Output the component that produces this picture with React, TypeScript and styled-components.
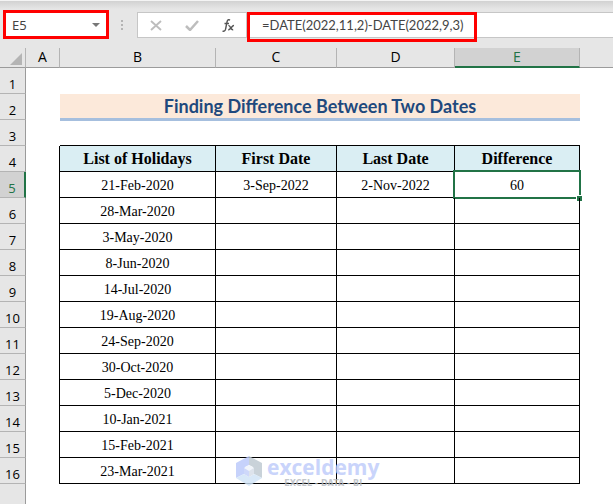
import React from "react";
import styled, { createGlobalStyle, css } from "styled-components";

const GlobalStyle = createGlobalStyle`
  *, *::before, *::after { box-sizing: border-box; }
  body {
    margin: 0;
    background: #ffffff;
    color: #000000;
    font-family: "Open Sans", "Noto Sans", sans-serif;
  }
`;

const GREEN = "#217346";
const RED = "#ff0000";

const Workbook = styled.main`
  position: relative;
  min-height: 100vh;
  overflow: hidden;
  display: flex;
  flex-direction: column;
`;

const FormulaBar = styled.header`
  display: flex;
  align-items: flex-start;
  height: 48px;
  padding-top: 10px;
  background: linear-gradient(#f4f4f4 0 1px, #d2d2d2 1px, #e6e6e6 9px);
`;

const NameBox = styled.div`
  display: flex;
  align-items: center;
  width: 106px;
  height: 29px;
  margin-left: 3px;
  border: 3px solid ${RED};
  background: #ffffff;
`;

const NameInput = styled.input`
  flex: 1;
  min-width: 0;
  padding: 0 0 0 6px;
  border: 0;
  outline: 0;
  background: transparent;
  color: #444444;
  font: 13px/20px "Noto Sans", sans-serif;
`;

const IconButton = styled.button<{ $width: number }>`
  display: flex;
  align-items: center;
  justify-content: center;
  width: ${(p) => p.$width}px;
  height: 23px;
  padding: 0;
  border: 0;
  background: transparent;
`;

const Grip = styled.div`
  display: grid;
  gap: 2px;
  margin: 10px 14px 0 12px;

  i {
    width: 2px;
    height: 2px;
    background: #b4b4b4;
  }
`;

const Actions = styled.div`
  display: flex;
  align-items: center;
  width: 110px;
  height: 26px;
  margin-top: 2px;
  border: 1px solid #c6c6c6;
  background: #ffffff;
`;

const FormulaField = styled.div`
  position: relative;
  flex: 1;
  height: 26px;
  margin-top: 2px;
  border: solid #c6c6c6;
  border-width: 1px 0;
  background: #ffffff;
`;

const FormulaInput = styled.input`
  display: block;
  width: 100%;
  height: 24px;
  padding: 0 0 0 15px;
  border: 0;
  outline: 0;
  background: transparent;
  color: #444444;
  font: 13px/24px Lato, sans-serif;
`;

const Callout = styled.div`
  position: absolute;
  top: -1px;
  left: 0;
  width: 230px;
  height: 30px;
  border: 3px solid ${RED};
  pointer-events: none;
`;

const Sheet = styled.table`
  width: 100%;
  table-layout: fixed;
  border-collapse: separate;
  border-spacing: 0;

  th, td { padding: 0; }
`;

const Col = styled.col<{ $width?: number }>`
  width: ${(p) => (p.$width ? `${p.$width}px` : "auto")};
`;

const Corner = styled.td`
  height: 20px;
  border-right: 1px solid #b4b4b4;
  border-bottom: 1px solid #9b9b9b;
  background: #e6e6e6;

  svg { display: block; margin: 3px 0 0 10px; }
`;

const ColumnHead = styled.th<{ $active?: boolean; $last?: boolean }>`
  height: 20px;
  border-right: ${(p) => (p.$last ? "0" : "1px solid #b4b4b4")};
  border-bottom: 1px solid #9b9b9b;
  background: #e6e6e6;
  font: 14px/18px "Open Sans", "Noto Sans", sans-serif;
  text-align: center;
  vertical-align: top;
  ${(p) =>
    p.$active &&
    css`
      border-bottom: 2px solid ${GREEN};
      background: #d2d2d2;
      color: ${GREEN};
    `}
`;

const RowHead = styled.th<{ $active?: boolean }>`
  height: 26px;
  border-right: 1px solid #9b9b9b;
  border-bottom: 1px solid #b4b4b4;
  background: #e6e6e6;
  font: 13px/17px "Open Sans", "Noto Sans", sans-serif;
  text-align: center;
  vertical-align: bottom;
  ${(p) =>
    p.$active &&
    css`
      border-right: 2px solid ${GREEN};
      background: #d2d2d2;
      color: ${GREEN};
    `}
`;

const Blank = styled.td<{ $right?: boolean; $bottom?: boolean }>`
  height: 26px;
  border-right: ${(p) => (p.$right ? "1px solid #000000" : "0")};
  border-bottom: ${(p) => (p.$bottom ? "1px solid #000000" : "0")};
`;

const Title = styled.td`
  border-bottom: 2px solid #a6bfde;
  background: #fce9da;
  box-shadow: 0 1px 0 #a6bfde;
  color: #1f497d;
  font: bold 18px/24px Lato, sans-serif;
  text-align: center;
`;

const Cell = styled.td`
  position: relative;
  height: 26px;
  border-right: 1px solid #000000;
  border-bottom: 1px solid #000000;
  font: 14px/23px "Liberation Serif", serif;
  text-align: center;
  vertical-align: bottom;
`;

const HeadingCell = styled.th`
  height: 26px;
  border-right: 1px solid #000000;
  border-bottom: 1px solid #000000;
  background: #daeef3;
  font: bold 16px/25px "Liberation Serif", serif;
  text-align: center;
`;

const Selection = styled.div`
  position: absolute;
  inset: -2px;
  border: 2px solid ${GREEN};

  &::after {
    content: "";
    position: absolute;
    right: -3px;
    bottom: -4px;
    width: 6px;
    height: 6px;
    border: solid #ffffff;
    border-width: 1px 0 0 1px;
    background: ${GREEN};
  }
`;

const Watermark = styled.div`
  position: absolute;
  z-index: 1;
  top: -2px;
  left: 19px;
  display: flex;
  gap: 4px;
  opacity: 0.8;
  pointer-events: none;
`;

const Brand = styled.div`
  color: #bccafb;
  font: bold 21px/23px "Open Sans", sans-serif;
  text-align: center;
  white-space: nowrap;

  small {
    display: block;
    color: #b4b9bf;
    font: bold 8px/9px "DejaVu Sans", sans-serif;
  }
`;

const columns = ["A", "B", "C", "D", "E"];
const widths = [26, 34, 156, 121, 118, 125];
const headings = ["List of Holidays", "First Date", "Last Date", "Difference"];
const holidays = [
  "21-Feb-2020", "28-Mar-2020", "3-May-2020", "8-Jun-2020",
  "14-Jul-2020", "19-Aug-2020", "24-Sep-2020", "30-Oct-2020",
  "5-Dec-2020", "10-Jan-2021", "15-Feb-2021", "23-Mar-2021",
];

function Logo() {
  return (
    <svg width="28" height="31" viewBox="0 0 28 31" aria-hidden="true">
      <path d="M14 0 1 7v15l8-4 1-7 4-2z" fill="#b8c8fb" />
      <path d="m14 0 13 7v15l-8-4-1-7-4-2z" fill="#bcc8d0" />
      <path d="m1 22 8-4 5 3 5-3 8 4-13 8z" fill="#cfe3f7" />
      <path d="m9 12 5-3 5 3v6l-5 3-5-3z" fill="#eef3fb" />
      <path d="m9 12 5 3v6l-5-3z" fill="#c3cffa" />
      <path d="m14 15 5-3v6l-5 3z" fill="#d5dde8" />
    </svg>
  );
}

export default function App() {
  return (
    <Workbook>
      <GlobalStyle />
      <FormulaBar>
        <NameBox>
          <NameInput aria-label="Name box" defaultValue="E5" />
          <IconButton $width={20} aria-label="Show names">
            <svg width="8" height="4" viewBox="0 0 8 4"><path d="M0 0h8L4 4z" fill="#777" /></svg>
          </IconButton>
        </NameBox>
        <Grip><i /><i /><i /></Grip>
        <Actions>
          <IconButton $width={36} aria-label="Cancel">
            <svg width="12" height="11" viewBox="0 0 12 11"><path d="m1 1 10 9M11 1 1 10" stroke="#bdbdbd" strokeWidth="1.9" /></svg>
          </IconButton>
          <IconButton $width={36} aria-label="Enter">
            <svg width="14" height="11" viewBox="0 0 14 11"><path d="m1 6 4 4 8-9" fill="none" stroke="#bdbdbd" strokeWidth="2.5" /></svg>
          </IconButton>
          <IconButton $width={36} aria-label="Insert function">
            <svg width="13" height="13" viewBox="0 0 13 13" fill="none" stroke="#555" strokeWidth="1.4">
              <path d="M8 1.2C6.500 0 5.400 1 5 3L3.600 10C3.300 11.800 2 12.600 .6 12M2.500 4.500H7" />
              <path d="M6.400 6.700c2-.8 2.400 4.800 4.800 4M12 6.500c-2-.3-3.500 4.700-5.800 4.300" />
            </svg>
          </IconButton>
        </Actions>
        <FormulaField>
          <FormulaInput aria-label="Formula" defaultValue="=DATE(2022,11,2)-DATE(2022,9,3)" />
          <Callout />
        </FormulaField>
      </FormulaBar>
      <Sheet>
        <colgroup>
          {widths.map((w, i) => <Col key={i} $width={w} />)}
          <Col />
        </colgroup>
        <thead>
          <tr>
            <Corner>
              <svg width="12" height="12" viewBox="0 0 12 12"><path d="M12 0v12H0z" fill="#b4b4b4" /></svg>
            </Corner>
            {columns.map((c) => <ColumnHead key={c} scope="col" $active={c === "E"}>{c}</ColumnHead>)}
            <ColumnHead $last />
          </tr>
        </thead>
        <tbody>
          <tr><RowHead scope="row">1</RowHead><Blank colSpan={6} /></tr>
          <tr><RowHead scope="row">2</RowHead><Blank /><Title colSpan={4}>Finding Difference Between Two Dates</Title><Blank /></tr>
          <tr><RowHead scope="row">3</RowHead><Blank /><Blank $bottom colSpan={4} /><Blank /></tr>
          <tr>
            <RowHead scope="row">4</RowHead>
            <Blank $right />
            {headings.map((h) => <HeadingCell key={h} scope="col">{h}</HeadingCell>)}
            <Blank />
          </tr>
          {holidays.map((date, i) => (
            <tr key={date}>
              <RowHead scope="row" $active={i === 0}>{i + 5}</RowHead>
              <Blank $right />
              <Cell>{date}</Cell>
              <Cell>
                {i === 0 && "3-Sep-2022"}
                {i === holidays.length - 1 && (
                  <Watermark><Logo /><Brand>exceldemy<small>EXCEL - DATA - BI</small></Brand></Watermark>
                )}
              </Cell>
              <Cell>{i === 0 && "2-Nov-2022"}</Cell>
              <Cell>{i === 0 && <>60<Selection /></>}</Cell>
              <Blank />
            </tr>
          ))}
          <tr><RowHead /><Blank colSpan={6} /></tr>
        </tbody>
      </Sheet>
    </Workbook>
  );
}
